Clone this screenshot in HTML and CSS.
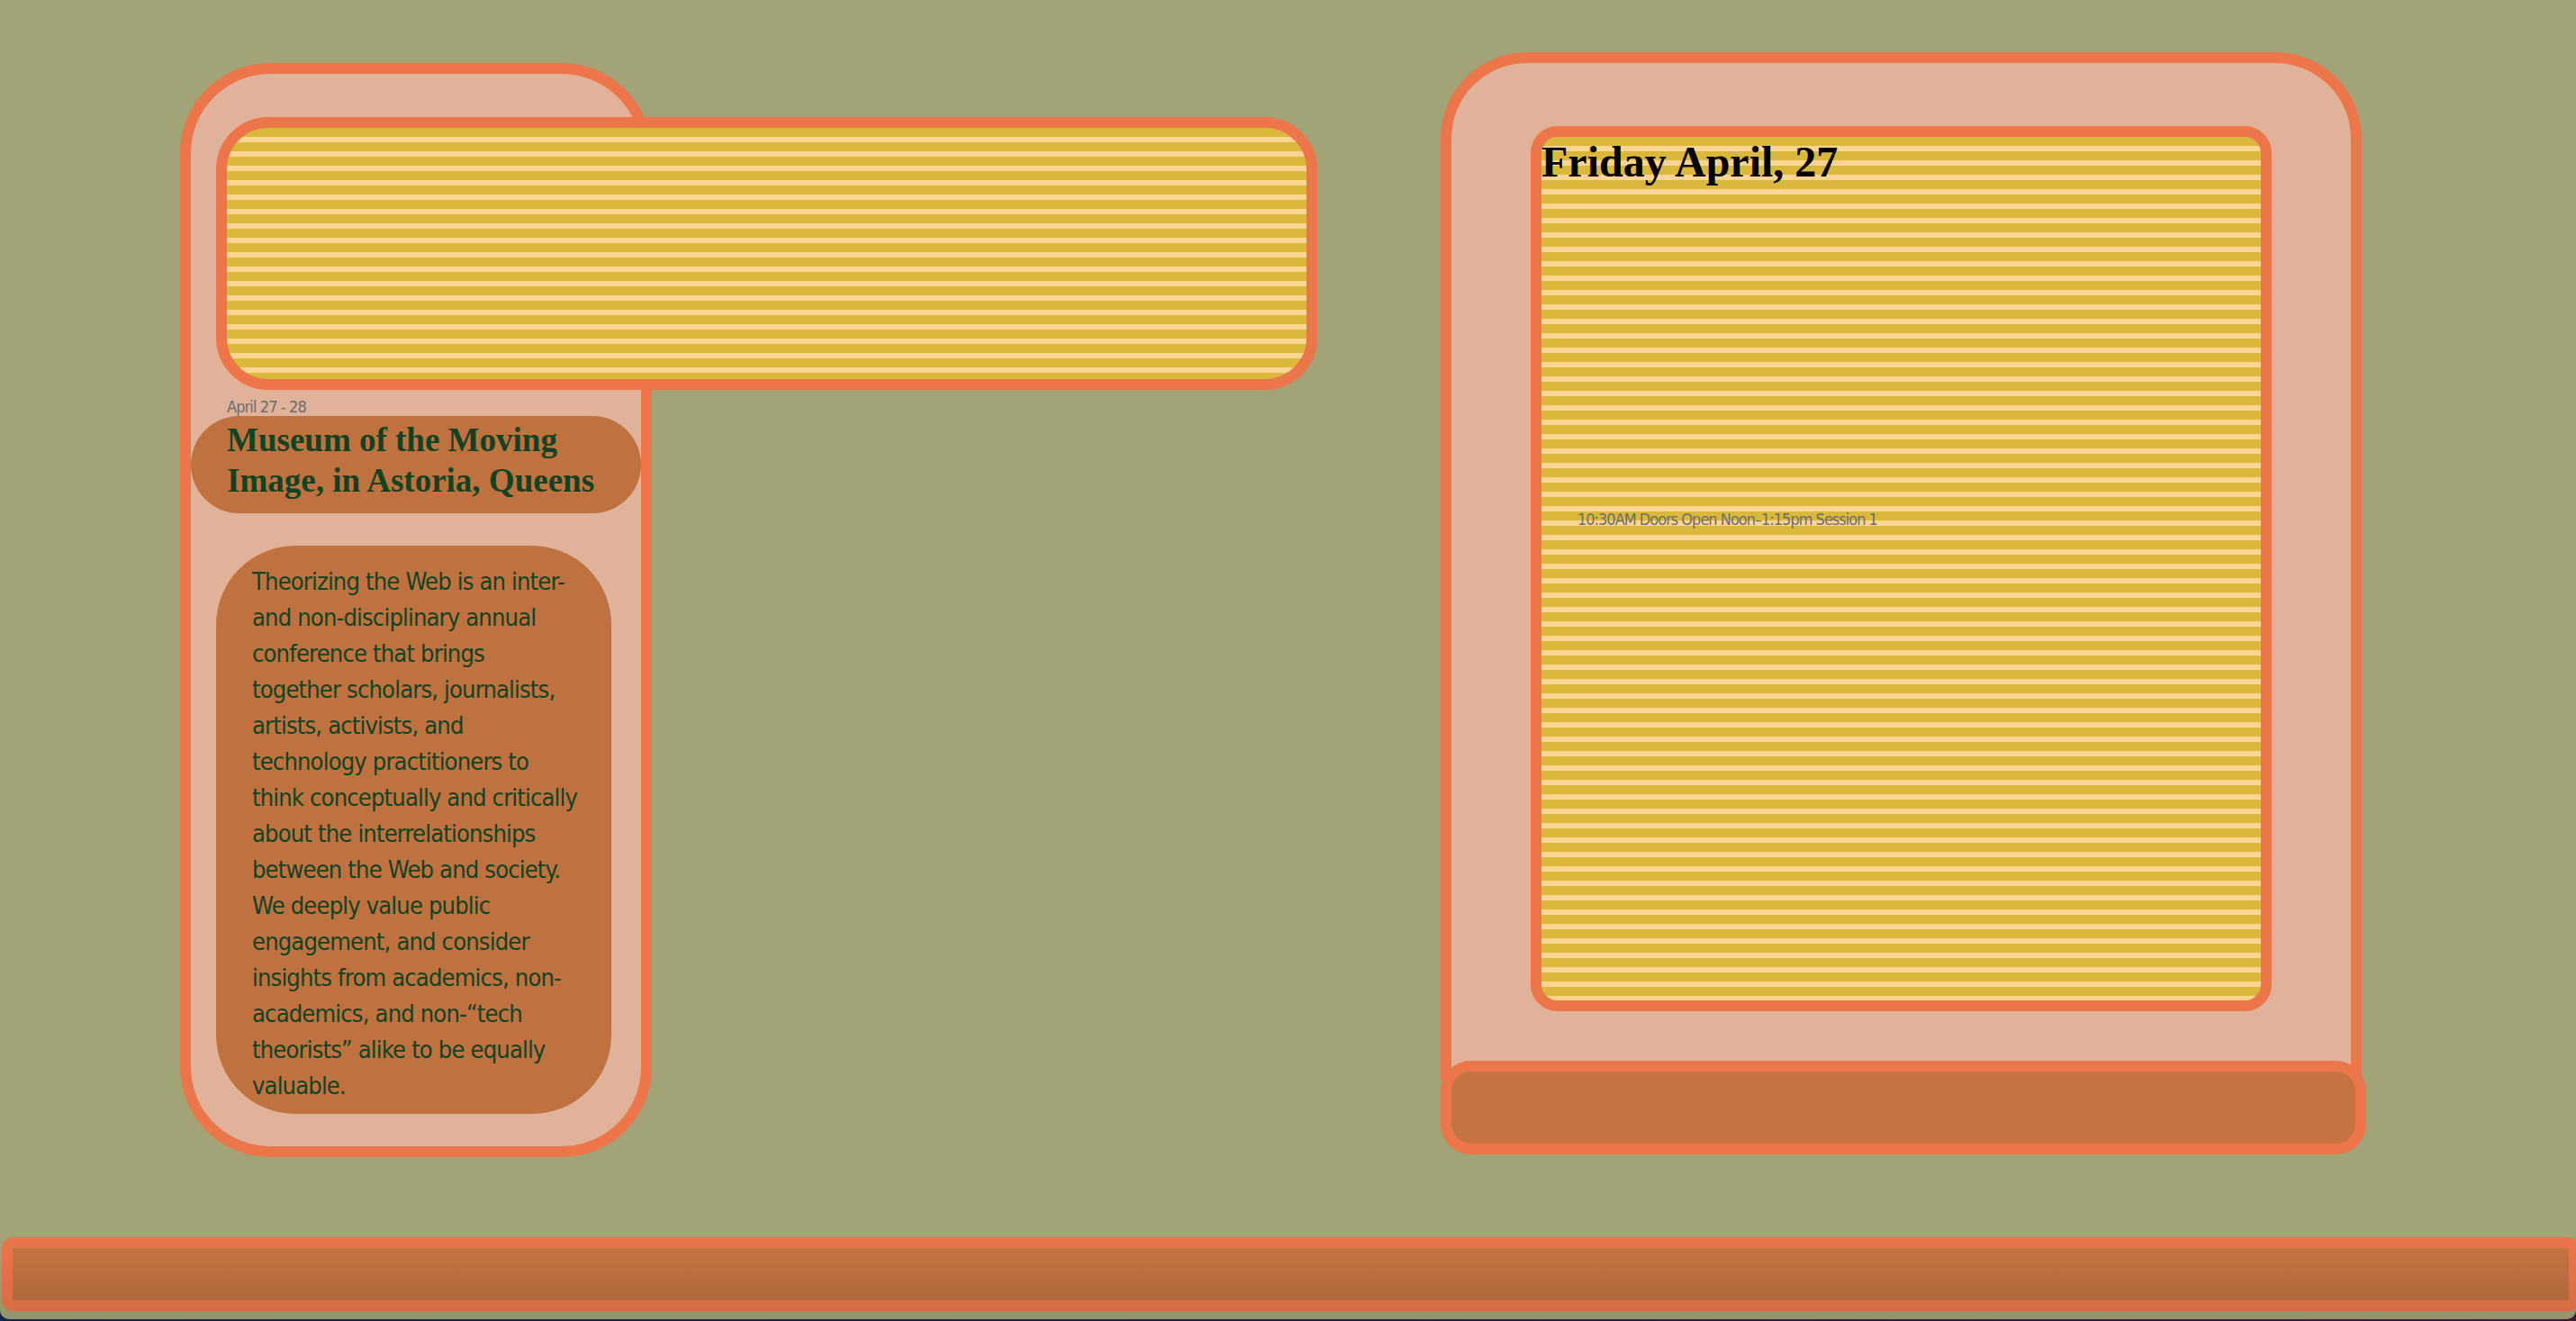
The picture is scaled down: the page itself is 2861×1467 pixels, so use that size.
FILE: index.html
```html
<!DOCTYPE html>
<html lang="en">
<head>
<meta charset="utf-8">
<title>Theorizing the Web</title>
<link rel="stylesheet" href="styles.css">
</head>
<body>
<div class="page">
  <main class="main">
    <section class="info-col">
      <div class="info-card">
        <div class="banner stripes"></div>
        <p class="dates">April 27 - 28</p>
        <h2 class="venue">Museum of the Moving Image, in Astoria, Queens</h2>
        <div class="about">
          <p>Theorizing the Web is an inter-<br>
          and non-disciplinary annual<br>
          conference that brings<br>
          together scholars, journalists,<br>
          artists, activists, and<br>
          technology practitioners to<br>
          think conceptually and critically<br>
          about the interrelationships<br>
          between the Web and society.<br>
          We deeply value public<br>
          engagement, and consider<br>
          insights from academics, non-<br>academics, and non-“tech<br>
          theorists” alike to be equally<br>
          valuable.</p>
        </div>
      </div>
    </section>
    <section class="schedule-col">
      <div class="schedule-card">
        <div class="schedule stripes">
          <h1 class="day">Friday April, 27</h1>
          <p class="slots">10:30AM Doors Open Noon–1:15pm Session 1</p>
        </div>
      </div>
      <div class="schedule-bar"></div>
    </section>
  </main>
  <footer class="footer-bar"></footer>
</div>
</body>
</html>
```
FILE: styles.css
```css
html {
  margin: 0;
  background: linear-gradient(90deg, #0f2947 0%, #2a1f45 60%, #3d1a3b 100%);
}

body {
  margin: 0;
  font-family: "Liberation Sans Narrow", "DejaVu Sans Condensed", "Open Sans", sans-serif;
  font-stretch: condensed;
}

.page {
  position: relative;
  display: flex;
  flex-direction: column;
  height: 1465px;
  background: #a2a377;
  border-radius: 0 0 10px 10px;
  overflow: hidden;
}

.page::after {
  content: "";
  position: absolute;
  left: 0;
  right: 0;
  bottom: 0;
  height: 95px;
  background: linear-gradient(180deg, rgba(30, 30, 0, 0) 0%, rgba(30, 30, 0, 0.11) 100%);
  pointer-events: none;
}

.main {
  display: grid;
  grid-template-columns: 524px 1028px;
  column-gap: 876px;
  align-items: start;
  padding-left: 200px;
}

.stripes {
  background: repeating-linear-gradient(180deg, #d9b83a 0 10px, #fdd593 10px 16px);
}

/* Left column */
.info-col {
  margin-top: 70px;
}

.info-card {
  box-sizing: border-box;
  width: 524px;
  border: 12px solid #ec754a;
  border-radius: 100px;
  background: #dfb299;
  padding-bottom: 36px;
}

.banner {
  box-sizing: border-box;
  width: 1223px;
  height: 303px;
  margin: 48px 0 0 28px;
  border: 12px solid #ec754a;
  border-radius: 58px;
}

.dates {
  margin: 9px 0 0 40px;
  font-size: 18px;
  letter-spacing: -0.9px;
  line-height: 20px;
  color: #6d6d6d;
}

.venue {
  box-sizing: border-box;
  height: 108px;
  margin: 0;
  padding: 4px 0 14px 40px;
  border-radius: 54px;
  background: #c07140;
  font-family: "Liberation Serif", "Times New Roman", serif;
  font-stretch: normal;
  font-weight: 700;
  font-size: 37px;
  line-height: 45px;
  color: #0f4322;
}

.about {
  box-sizing: border-box;
  width: 439px;
  margin: 36px 0 0 28px;
  padding: 20px 20px 11px 40px;
  border-radius: 88px;
  background: #c07140;
}

.about p {
  margin: 0;
  font-size: 27px;
  letter-spacing: -0.8px;
  line-height: 40px;
  white-space: nowrap;
  color: #0f4322;
}

/* Right column */
.schedule-col {
  display: flex;
  flex-direction: column;
  margin-top: 58px;
}

.schedule-card {
  box-sizing: border-box;
  width: 1023px;
  height: 1142px;
  padding: 70px 88px 0 88px;
  border: 12px solid #ec754a;
  border-radius: 96px 96px 0 0;
  background: #dfb299;
}

.schedule {
  box-sizing: border-box;
  height: 983px;
  border: 12px solid #ec754a;
  border-radius: 30px;
}

.day {
  margin: 0;
  font-family: "Liberation Serif", "Times New Roman", serif;
  font-stretch: normal;
  font-weight: 700;
  font-size: 48px;
  line-height: 55px;
  color: #000;
}

.slots {
  margin: 358px 0 0 40px;
  font-size: 18px;
  letter-spacing: -1px;
  line-height: 24px;
  color: #6d6d6d;
}

.schedule-bar {
  box-sizing: border-box;
  width: 1028px;
  height: 104px;
  margin-top: -22px;
  border: 12px solid #ec754a;
  border-radius: 34px;
  background: #c57441;
}

/* Footer */
.footer-bar {
  box-sizing: border-box;
  height: 82px;
  margin: auto -4px 9px 2px;
  border: 12px solid #ec754a;
  border-radius: 13px;
  background: linear-gradient(180deg, #c77643 0%, #c07040 100%);
}
```
